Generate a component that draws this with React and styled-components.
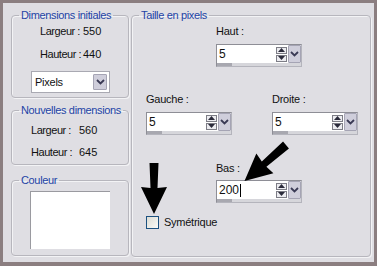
import React from "react";
import styled, { createGlobalStyle } from "styled-components";

const Global = createGlobalStyle`
  html, body { margin: 0; padding: 0; background: #8b7e80; }
  body { font-family: "Liberation Sans", Arial, sans-serif; }
`;

const Frame = styled.div`
  position: relative;
  width: 377px;
  height: 266px;
  box-sizing: border-box;
  background: #8b7e80;
  padding: 3px 3px 4px 3px;
`;

const Panel = styled.div`
  height: 100%;
  box-sizing: border-box;
  background: #dfdee3;
  display: flex;
  gap: 2px;
  padding: 6px 3px 0 8px;
  font-size: 11px;
  letter-spacing: -0.25px;
  color: #111;
`;

const Column = styled.div`
  display: flex;
  flex-direction: column;
  width: 118px;
`;

const Group = styled.fieldset`
  box-sizing: border-box;
  margin: 0 0 ${p => p.$mb || 0}px 0;
  padding: 0;
  min-width: 0;
  width: ${p => p.$w || 118}px;
  height: ${p => p.$h}px;
  border: 1px solid #b7b6bd;
  border-radius: 4px;
  box-shadow: 1px 1px 0 #f3f3f5, inset 1px 1px 0 #f3f3f5;
`;

const Legend = styled.legend`
  margin-left: 7px;
  padding: 0 2px;
  line-height: 13px;
  font-size: 11px;
  letter-spacing: -0.35px;
  color: #2344a6;
`;

const DimGrid = styled.div`
  display: grid;
  grid-template-columns: ${p => p.$col}px auto;
  row-gap: ${p => p.$gap}px;
  padding: ${p => p.$pt}px 0 0 ${p => p.$pl}px;
  line-height: 14px;
  letter-spacing: -0.45px;

  & > span:nth-child(even) { letter-spacing: 0; }
`;

const Select = styled.div`
  display: flex;
  align-items: center;
  justify-content: space-between;
  box-sizing: border-box;
  width: 79px;
  height: 22px;
  margin: 10px 0 0 19px;
  padding: 0 2px 0 3px;
  background: #fff;
  border: 1px solid #a9a9b2;
  line-height: 14px;
`;

const DropBtn = styled.div`
  display: flex;
  align-items: center;
  justify-content: center;
  box-sizing: border-box;
  width: ${p => p.$w || 13}px;
  height: ${p => p.$h || 16}px;
  background: #cfcedb;
  border: 1px solid #a5a4b4;
  border-radius: 1px;
`;

const ColorBox = styled.div`
  box-sizing: border-box;
  width: 80px;
  height: 58px;
  margin: 4px 0 0 18px;
  background: #fff;
  border-left: 1px solid #9a9aa0;
  border-top: 1px solid #9a9aa0;
`;

const Row = styled.div`
  display: flex;
  gap: ${p => p.$gap || 0}px;
  padding-left: ${p => p.$pl || 0}px;
  margin-top: ${p => p.$mt || 0}px;
`;

const Field = styled.div`
  display: flex;
  flex-direction: column;
`;

const Label = styled.div`
  line-height: 14px;
  margin-bottom: ${p => p.$mb}px;
`;

const Spin = styled.div`
  box-sizing: border-box;
  width: 86px;
  height: 23px;
  display: flex;
  flex-direction: column;
  background: #fff;
  border: 1px solid #b4b4bc;
  border-top-color: #8e8e96;
  border-left-color: #8e8e96;
`;

const SpinTop = styled.div`
  flex: 1;
  display: flex;
  align-items: center;
`;

const Value = styled.div`
  flex: 1;
  padding-left: 2px;
  font-size: 12px;
  letter-spacing: 0;
  line-height: 14px;
  display: flex;
  align-items: center;
`;

const Caret = styled.span`
  display: inline-block;
  width: 1px;
  height: 13px;
  margin-left: 1px;
  background: #000;
`;

const Arrows = styled.div`
  display: flex;
  flex-direction: column;
  gap: 1px;
  margin-right: 1px;
`;

const ArrowBtn = styled.div`
  box-sizing: border-box;
  width: 11px;
  height: 7px;
  border: 1px solid #7d7d86;
  background: #ececf0;
  display: flex;
  align-items: center;
  justify-content: center;
`;

const Track = styled.div`
  height: 4px;
  background: #d6d6db;
  display: flex;
`;

const Thumb = styled.div`
  width: 15px;
  background: #a8a8b0;
`;

const Check = styled.label`
  display: flex;
  align-items: center;
  gap: 5px;
  margin: 12px 0 0 14px;
  line-height: 14px;
`;

const Box = styled.span`
  box-sizing: border-box;
  width: 13px;
  height: 13px;
  border: 1px solid #1c5180;
  background: linear-gradient(135deg, #dcdcd4, #fbfbf8);
`;

const Overlay = styled.svg`
  position: absolute;
  left: 0;
  top: 0;
  pointer-events: none;
`;

const Chevron = () => (
  <svg width="9" height="6" viewBox="0 0 9 6">
    <path d="M1 1 L4.5 4.5 L8 1" fill="none" stroke="#3a3a55" strokeWidth="1.8" />
  </svg>
);

const Tri = ({ up }) => (
  <svg width="7" height="4" viewBox="0 0 7 4">
    <path d={up ? "M0 4 L3.5 0 L7 4 Z" : "M0 0 L3.5 4 L7 0 Z"} fill="#2a2a3a" />
  </svg>
);

const SpinField = ({ value, caret }) => (
  <Spin>
    <SpinTop>
      <Value>{value}{caret && <Caret />}</Value>
      <Arrows>
        <ArrowBtn><Tri up /></ArrowBtn>
        <ArrowBtn><Tri /></ArrowBtn>
      </Arrows>
      <DropBtn $h={18}><Chevron /></DropBtn>
    </SpinTop>
    <Track><Thumb /></Track>
  </Spin>
);

// arrow pointing down from (0,0), tip at (0,len)
const arrow = len =>
  `M-4.5 0 L4.5 0 L3.5 ${len - 26} L13 ${len - 27} L0 ${len} L-13 ${len - 27} L-3.5 ${len - 26} Z`;

export default function App() {
  return (
    <Frame>
      <Global />
      <Panel>
        <Column>
          <Group $h={89} $mb={6}>
            <Legend>Dimensions initiales</Legend>
            <DimGrid $col={43} $gap={9} $pt={2} $pl={28}>
              <span>Largeur :</span><span>550</span>
              <span>Hauteur :</span><span>440</span>
            </DimGrid>
            <Select>
              <span>Pixels</span>
              <DropBtn $w={14} $h={16}><Chevron /></DropBtn>
            </Select>
          </Group>
          <Group $h={61} $mb={9}>
            <Legend>Nouvelles dimensions</Legend>
            <DimGrid $col={48} $gap={8} $pt={6} $pl={19}>
              <span>Largeur :</span><span>560</span>
              <span>Hauteur :</span><span>645</span>
            </DimGrid>
          </Group>
          <Group $h={82}>
            <Legend>Couleur</Legend>
            <ColorBox />
          </Group>
        </Column>
        <Group $w={241} $h={248}>
          <Legend>Taille en pixels</Legend>
          <Row $pl={84} $mt={2}>
            <Field>
              <Label $mb={6}>Haut :</Label>
              <SpinField value="5" />
            </Field>
          </Row>
          <Row $pl={14} $mt={25} $gap={40}>
            <Field>
              <Label $mb={6}>Gauche :</Label>
              <SpinField value="5" />
            </Field>
            <Field>
              <Label $mb={6}>Droite :</Label>
              <SpinField value="5" />
            </Field>
          </Row>
          <Row $pl={84} $mt={26}>
            <Field>
              <Label $mb={5}>Bas :</Label>
              <SpinField value="200" caret />
            </Field>
          </Row>
          <Check>
            <Box />
            <span>Symétrique</span>
          </Check>
        </Group>
      </Panel>
      <Overlay width="377" height="266" viewBox="0 0 377 266">
        <path d={arrow(51)} fill="#000" transform="translate(154 163)" />
        <path d={arrow(55)} fill="#000" transform="translate(286 145) rotate(49)" />
      </Overlay>
    </Frame>
  );
}
